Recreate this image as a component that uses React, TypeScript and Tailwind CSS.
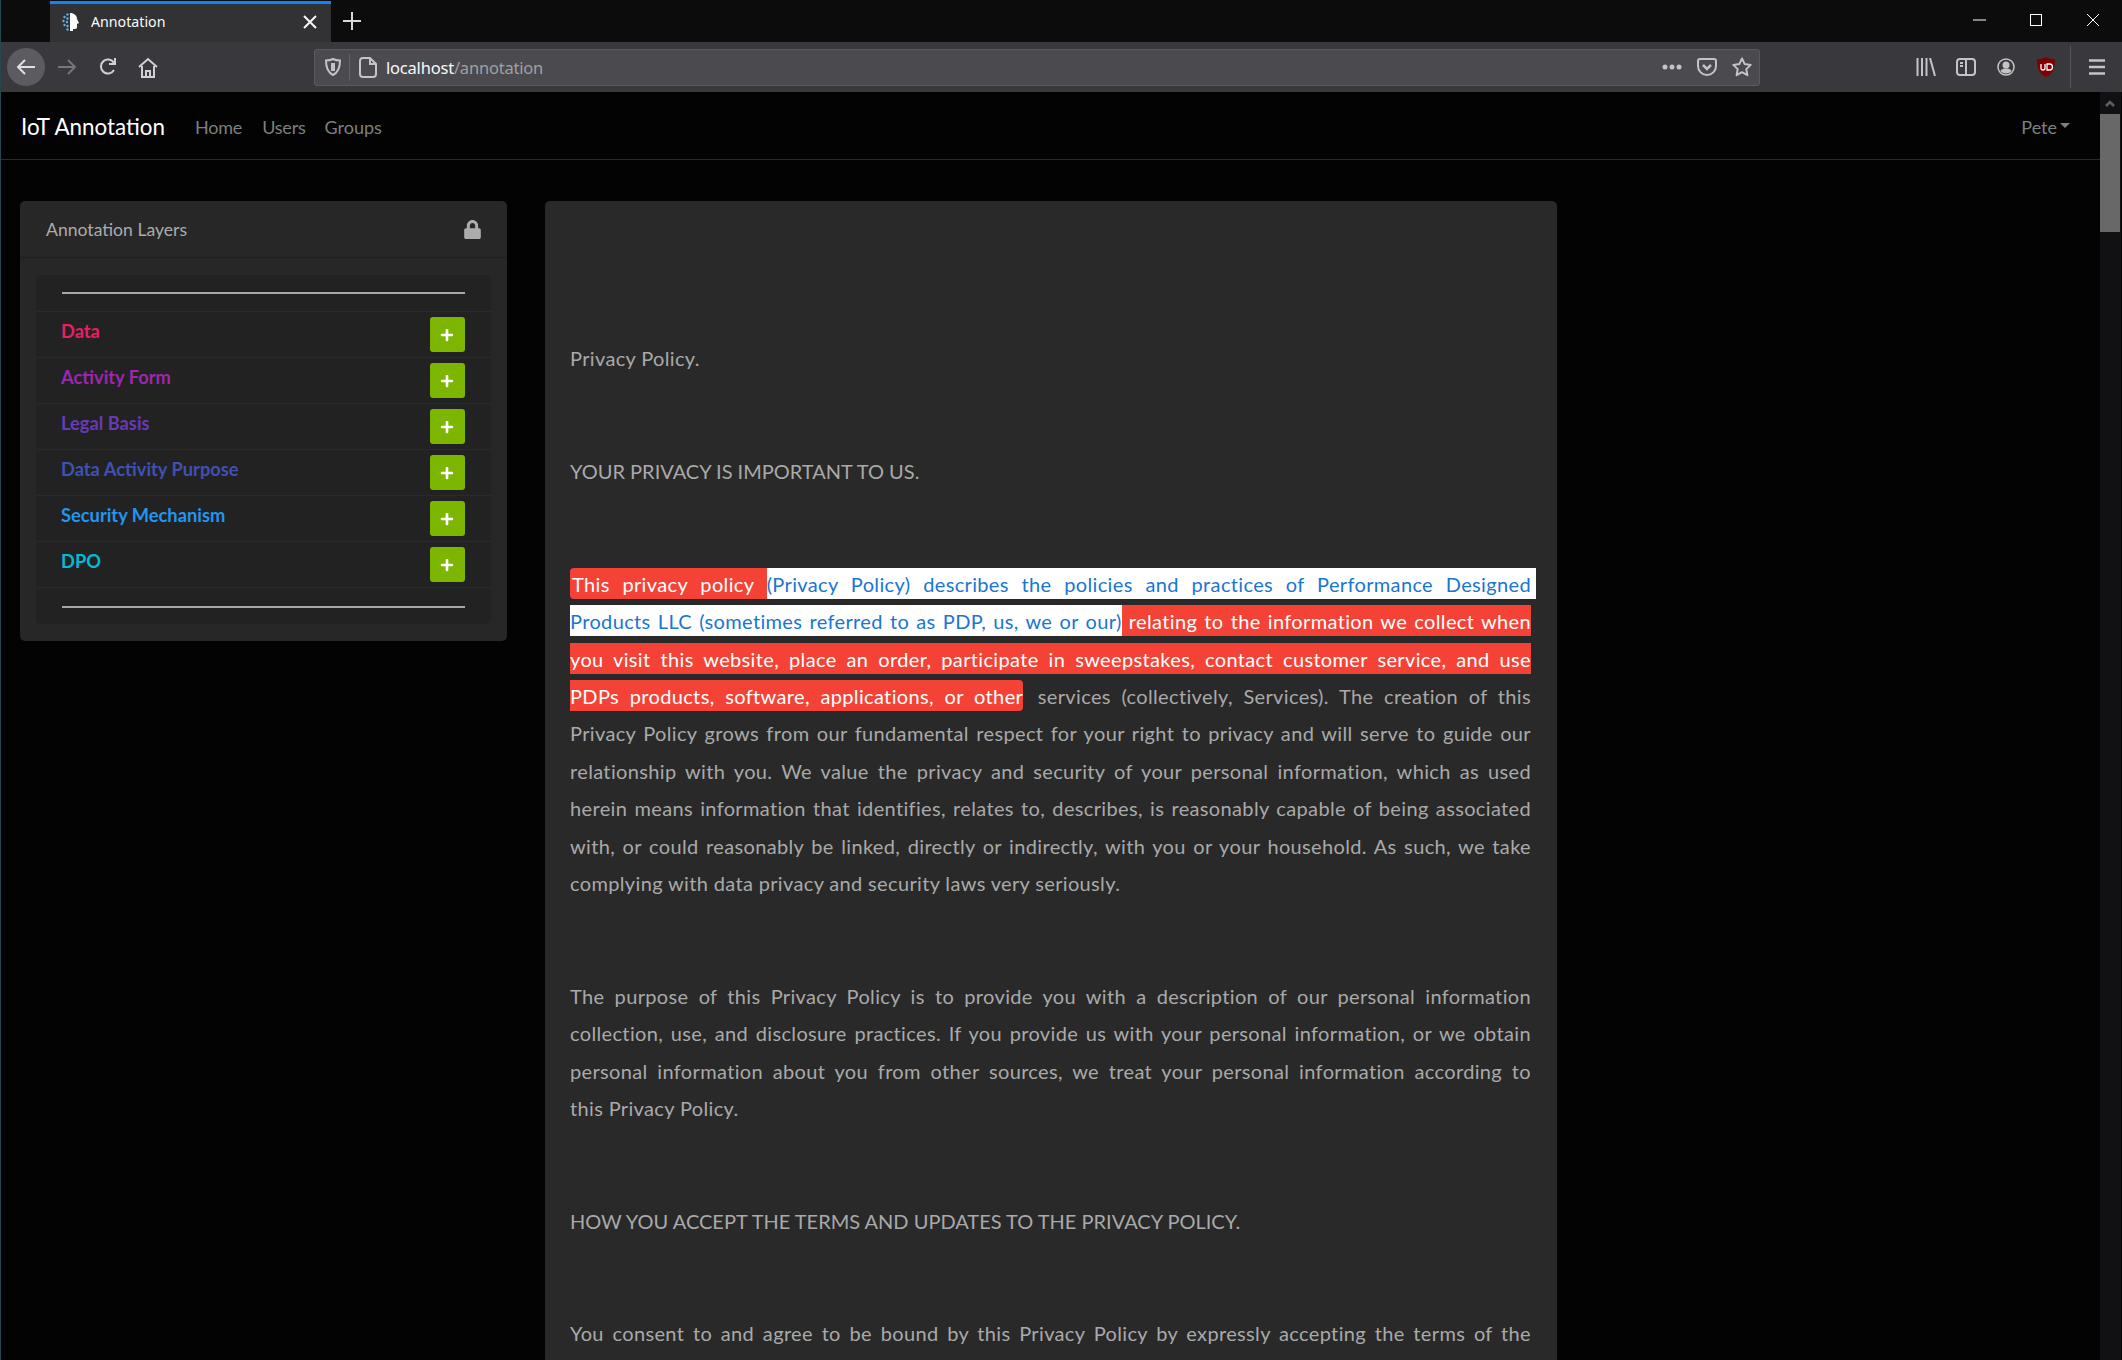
import { FaLock, FaPlus } from 'react-icons/fa';

const layers = [
    { name: 'Data', color: 'text-[#e91e63]' },
    { name: 'Activity Form', color: 'text-[#9c27b0]' },
    { name: 'Legal Basis', color: 'text-[#673ab7]' },
    { name: 'Data Activity Purpose', color: 'text-[#3f51b5]' },
    { name: 'Security Mechanism', color: 'text-[#2196f3]' },
    { name: 'DPO', color: 'text-[#00bcd4]' },
];

const introLines = [
    'Privacy Policy grows from our fundamental respect for your right to privacy and will serve to guide our',
    'relationship with you. We value the privacy and security of your personal information, which as used',
    'herein means information that identifies, relates to, describes, is reasonably capable of being associated',
    'with, or could reasonably be linked, directly or indirectly, with you or your household. As such, we take',
];

const purposeLines = [
    'The purpose of this Privacy Policy is to provide you with a description of our personal information',
    'collection, use, and disclosure practices. If you provide us with your personal information, or we obtain',
    'personal information about you from other sources, we treat your personal information according to',
];

const justified = '[text-align-last:justify] whitespace-nowrap';
const redMark = 'bg-[#f44336] py-[3.500px] text-white';
const whiteMark = 'bg-white py-[3.500px] text-[#1976d2]';

function Favicon() {
    return (
        <svg width="18" height="20" viewBox="0 0 18 20">
            <path d="M8 1c4 0 7 2.500 7 6l2 4-2 1v3c0 2-1 2-4 2v2H8z" fill="#fff" />
            <g fill="#5ab0f0">
                <circle cx="5.500" cy="2.500" r="1.200" />
                <circle cx="2.500" cy="5" r="1.200" />
                <circle cx="5.500" cy="6.500" r="1.200" />
                <circle cx="1.500" cy="9" r="1.200" />
                <circle cx="5" cy="10" r="1.200" />
                <circle cx="2.500" cy="13" r="1.200" />
                <circle cx="5.500" cy="14" r="1.200" />
                <circle cx="5.500" cy="17.500" r="1.200" />
            </g>
        </svg>
    );
}

function TabBar() {
    return (
        <div className="flex h-[42px] bg-[#0c0c0d] pl-[49px]">
            <div className="mt-px flex h-[41px] w-[281px] items-center border-t-[3px] border-[#0a84ff] bg-[#323234] pb-[2px] pl-[12px] pr-[14px] text-[14.200px] text-[#f9f9fa]">
                <Favicon />
                <span className="ml-[11px] flex-1">Annotation</span>
                <svg width="14" height="14" viewBox="0 0 14 14" stroke="#f9f9fa" strokeWidth="2">
                    <path d="M1 1l12 12M13 1L1 13" />
                </svg>
            </div>
            <div className="flex h-[42px] items-center pl-[12px]">
                <svg width="18" height="18" viewBox="0 0 18 18" stroke="#d8d8d8" strokeWidth="2">
                    <path d="M9 0v18M0 9h18" />
                </svg>
            </div>
            <div className="flex-1" />
            <div className="flex h-[40px] items-center pr-[22px]">
                <svg width="13" height="2" viewBox="0 0 13 2" className="mr-[44px]">
                    <path d="M0 1h13" stroke="#fff" strokeWidth="1" />
                </svg>
                <svg width="12" height="12" viewBox="0 0 12 12" className="mr-[44px]">
                    <rect x="0.500" y="0.500" width="11" height="11" fill="none" stroke="#fff" strokeWidth="1" />
                </svg>
                <svg width="14" height="14" viewBox="0 0 14 14">
                    <path d="M1 1l12 12M13 1L1 13" stroke="#fff" strokeWidth="1" />
                </svg>
            </div>
        </div>
    );
}

function ToolBar() {
    return (
        <div className="flex h-[50px] items-center bg-[#38383d] pl-[5px]">
            <div className="flex h-[40px] w-[40px] items-center justify-center rounded-full border border-[#38383d] bg-[#5c5c60]">
                <svg width="20" height="18" viewBox="0 0 20 18" fill="none" stroke="#e0e0e2" strokeWidth="2">
                    <path d="M19 9H2M9 2L2 9l7 7" />
                </svg>
            </div>
            <svg width="20" height="18" viewBox="0 0 20 18" fill="none" stroke="#77777a" strokeWidth="2" className="ml-[11px]">
                <path d="M1 9h17M11 2l7 7-7 7" />
            </svg>
            <svg width="20" height="20" viewBox="0 0 20 20" fill="none" stroke="#d0d0d2" strokeWidth="2" className="ml-[21px]">
                <path d="M16 13a7 7 0 1 1 0-7M17 1v6h-6" />
            </svg>
            <svg width="20" height="21" viewBox="0 0 20 21" fill="none" stroke="#d0d0d2" strokeWidth="2" className="ml-[20px]">
                <path d="M1 10l9-8 9 8M4 9v11h12V9M8 20v-6h4v6" />
            </svg>
            <div className="ml-[156px] flex h-[37px] w-[1446px] items-center rounded-[3px] border border-[#5a5a5f] bg-[#4a4a4f] pl-[10px] pr-[7px]">
                <svg width="16" height="18" viewBox="0 0 16 18" fill="none" stroke="#c4c4c6" strokeWidth="2">
                    <path d="M8 1c2 1 4 1.500 7 1.500 0 7-2 12-7 14.500C3 14.500 1 9.500 1 2.500 4 2.500 6 2 8 1z" />
                    <path d="M8 5v8" strokeWidth="4" />
                </svg>
                <div className="ml-[8px] h-[27px] w-px bg-[#5f5f64]" />
                <svg width="18" height="21" viewBox="0 0 18 21" fill="none" stroke="#c4c4c6" strokeWidth="2" className="ml-[9px]">
                    <path d="M4 1h7l6 6v10a3 3 0 0 1-3 3H4a3 3 0 0 1-3-3V4a3 3 0 0 1 3-3zM11 1v6h6" />
                </svg>
                <span className="ml-[9px] mt-[2px] flex-1 text-[16.500px] tracking-[-0.200px] text-[#f9f9fa]">
                    localhost<span className="text-[#a0a0a2]">/annotation</span>
                </span>
                <svg width="20" height="6" viewBox="0 0 20 6" fill="#c4c4c6">
                    <circle cx="3" cy="3" r="2.500" />
                    <circle cx="10" cy="3" r="2.500" />
                    <circle cx="17" cy="3" r="2.500" />
                </svg>
                <svg width="20" height="19" viewBox="0 0 20 19" fill="none" stroke="#c4c4c6" strokeWidth="2" className="ml-[15px]">
                    <path d="M3 1h14a2 2 0 0 1 2 2v5a9 9 0 0 1-18 0V3a2 2 0 0 1 2-2z" />
                    <path d="M6 7l4 4 4-4" strokeWidth="2.500" />
                </svg>
                <svg width="20" height="20" viewBox="0 0 20 20" fill="none" stroke="#c4c4c6" strokeWidth="2" className="ml-[15px]">
                    <path d="M10 1.500l2.700 5.600 6 .8-4.400 4.200 1.100 6.100-5.400-3-5.400 3 1.100-6.100L1.300 7.900l6-.8z" strokeLinejoin="round" />
                </svg>
            </div>
            <svg width="20" height="18" viewBox="0 0 20 18" fill="none" stroke="#c4c4c6" strokeWidth="2" className="ml-[156px]">
                <path d="M1.500 0v18M6 0v18M10.500 0v18M14 0l5 18" />
            </svg>
            <svg width="20" height="18" viewBox="0 0 20 18" fill="none" stroke="#c4c4c6" strokeWidth="2" className="ml-[20px]">
                <rect x="1" y="1" width="18" height="16" rx="3" />
                <path d="M10 1v16M4 5h3M4 8h3" />
            </svg>
            <svg width="18" height="18" viewBox="0 0 18 18" className="ml-[21px]">
                <circle cx="9" cy="9" r="8" fill="none" stroke="#c4c4c6" strokeWidth="1.500" />
                <circle cx="9" cy="7" r="3.500" fill="#c4c4c6" />
                <path d="M3.500 13c1-2 3-2.500 5.500-2.500s4.500.5 5.500 2.500c-1 1.500-3 2.500-5.500 2.500S4.500 14.500 3.500 13z" fill="#c4c4c6" />
            </svg>
            <svg width="18" height="20" viewBox="0 0 18 20" className="ml-[22px]">
                <path d="M9 0c2 1.500 5 2 9 2 0 9-2 15-9 18C2 17 0 11 0 2c4 0 7-.5 9-2z" fill="#800000" />
                <path d="M4 7v4a2 2 0 0 0 4 0V7M10 7h2.500a2.500 2.500 0 0 1 0 6H10z" fill="none" stroke="#fff" strokeWidth="1.300" />
            </svg>
            <div className="ml-[15px] h-[42px] w-px bg-[#55555a]" />
            <svg width="16" height="16" viewBox="0 0 16 16" stroke="#c4c4c6" strokeWidth="2.500" className="ml-[18px]">
                <path d="M0 1.500h16M0 8h16M0 14.500h16" />
            </svg>
        </div>
    );
}

function LayerRow({ name, color }: { name: string; color: string }) {
    return (
        <div className="flex h-[46px] items-start justify-between border-t border-[#2a2a2a] pl-[25px] pr-[26px] pt-[5px]">
            <span className={`${color} mt-[3px] text-[18.300px] font-bold leading-[22px]`}>{name}</span>
            <div className="flex h-[35px] w-[35px] items-center justify-center rounded-[3px] bg-[#7cb600] pr-px pt-px text-white">
                <FaPlus size={14} />
            </div>
        </div>
    );
}

function LayersPanel() {
    return (
        <div className="h-[440px] w-[487px] shrink-0 rounded-[5px] bg-[#272727]">
            <div className="flex h-[57px] items-center justify-between border-b border-[#1f1f1f] pl-[26px] pr-[25px] text-[17.600px] text-[#ababab]">
                <span className="mt-[3px]">Annotation Layers</span>
                <FaLock size={19} className="text-[#acacac]" />
            </div>
            <div className="mx-[16px] mt-[17px] h-[349px] rounded-[5px] bg-[#222222]">
                <div className="pb-[17px] pl-[26px] pr-[26px] pt-[17px]">
                    <div className="h-[2px] bg-[#a8a8a8]" />
                </div>
                {layers.map(layer => (
                    <LayerRow key={layer.name} name={layer.name} color={layer.color} />
                ))}
                <div className="border-t border-[#2a2a2a] pl-[26px] pr-[26px] pt-[18px]">
                    <div className="h-[2px] bg-[#a8a8a8]" />
                </div>
            </div>
        </div>
    );
}

function PolicyCard() {
    return (
        <div className="ml-[38px] h-[1200px] w-[1012px] shrink-0 overflow-hidden rounded-t-[5px] bg-[#292929] pl-[25px] pr-[26px] pt-[139px] text-[20px] leading-[37.500px] tracking-[0.350px] text-[#a9a9a9]">
            <p className="mb-[75px]">Privacy Policy.</p>
            <p className="mb-[75px] tracking-normal">YOUR PRIVACY IS IMPORTANT TO US.</p>
            <div className="mb-[75px]">
                <div className={justified}>
                    <span className={`${redMark} rounded-l-[4px] pl-[2px]`}>This privacy policy </span>
                    <span className={`${whiteMark} mr-[-5px] pr-[5px]`}>(Privacy Policy) describes the policies and practices of Performance Designed</span>
                </div>
                <div className={justified}>
                    <span className={whiteMark}>Products LLC (sometimes referred to as PDP, us, we or our)</span>
                    <span className={redMark}> relating to the information we collect when</span>
                </div>
                <div className={justified}>
                    <span className={redMark}>you visit this website, place an order, participate in sweepstakes, contact customer service, and use</span>
                </div>
                <div className={justified}>
                    <span className={`${redMark} rounded-r-[4px]`}>PDPs products, software, applications, or other</span>
                    <span className="ml-[4px]"> services (collectively, Services). The creation of this</span>
                </div>
                {introLines.map(line => (
                    <div key={line} className={justified}>{line}</div>
                ))}
                <div>complying with data privacy and security laws very seriously.</div>
            </div>
            <div className="mb-[75px]">
                {purposeLines.map(line => (
                    <div key={line} className={justified}>{line}</div>
                ))}
                <div>this Privacy Policy.</div>
            </div>
            <p className="mb-[75px] tracking-normal">HOW YOU ACCEPT THE TERMS AND UPDATES TO THE PRIVACY POLICY.</p>
            <div className={justified}>You consent to and agree to be bound by this Privacy Policy by expressly accepting the terms of the</div>
        </div>
    );
}

export default function App() {
    return (
        <div className="flex h-[1360px] w-[2122px] flex-col overflow-hidden border-l border-[#1f4a50] bg-[#030303] font-['Lato',sans-serif]">
            <div className="font-['Noto_Sans',sans-serif]">
                <TabBar />
                <ToolBar />
            </div>
            <div className="flex min-h-0 flex-1">
                <div className="w-[2099px]">
                    {/* Navbar */}
                    <div className="flex h-[68px] items-center border-b border-[#2b2b2b] pl-[20px] pr-[30px] pt-[3px] text-[18px] text-[#7f7f7f]">
                        <span className="mr-[30px] text-[22.400px] text-white">IoT Annotation</span>
                        <span className="mr-[20px] tracking-[-0.200px]">Home</span>
                        <span className="mr-[19px] tracking-[-0.200px]">Users</span>
                        <span className="flex-1">Groups</span>
                        <span>Pete</span>
                        <div className="mb-[3px] ml-[3px] h-0 w-0 border-x-[5px] border-t-[5px] border-x-transparent border-t-[#7f7f7f]" />
                    </div>
                    <div className="flex items-start pl-[19px] pt-[41px]">
                        <LayersPanel />
                        <PolicyCard />
                    </div>
                </div>
                {/* Scrollbar */}
                <div className="w-[21px] shrink-0 bg-[#111114] pr-px">
                    <div className="flex h-[22px] items-center justify-center">
                        <svg width="10" height="7" viewBox="0 0 10 7" fill="none" stroke="#5f5f5f" strokeWidth="2.500">
                            <path d="M1 6l4-4 4 4" />
                        </svg>
                    </div>
                    <div className="h-[118px] bg-[#686868]" />
                </div>
            </div>
        </div>
    );
}
